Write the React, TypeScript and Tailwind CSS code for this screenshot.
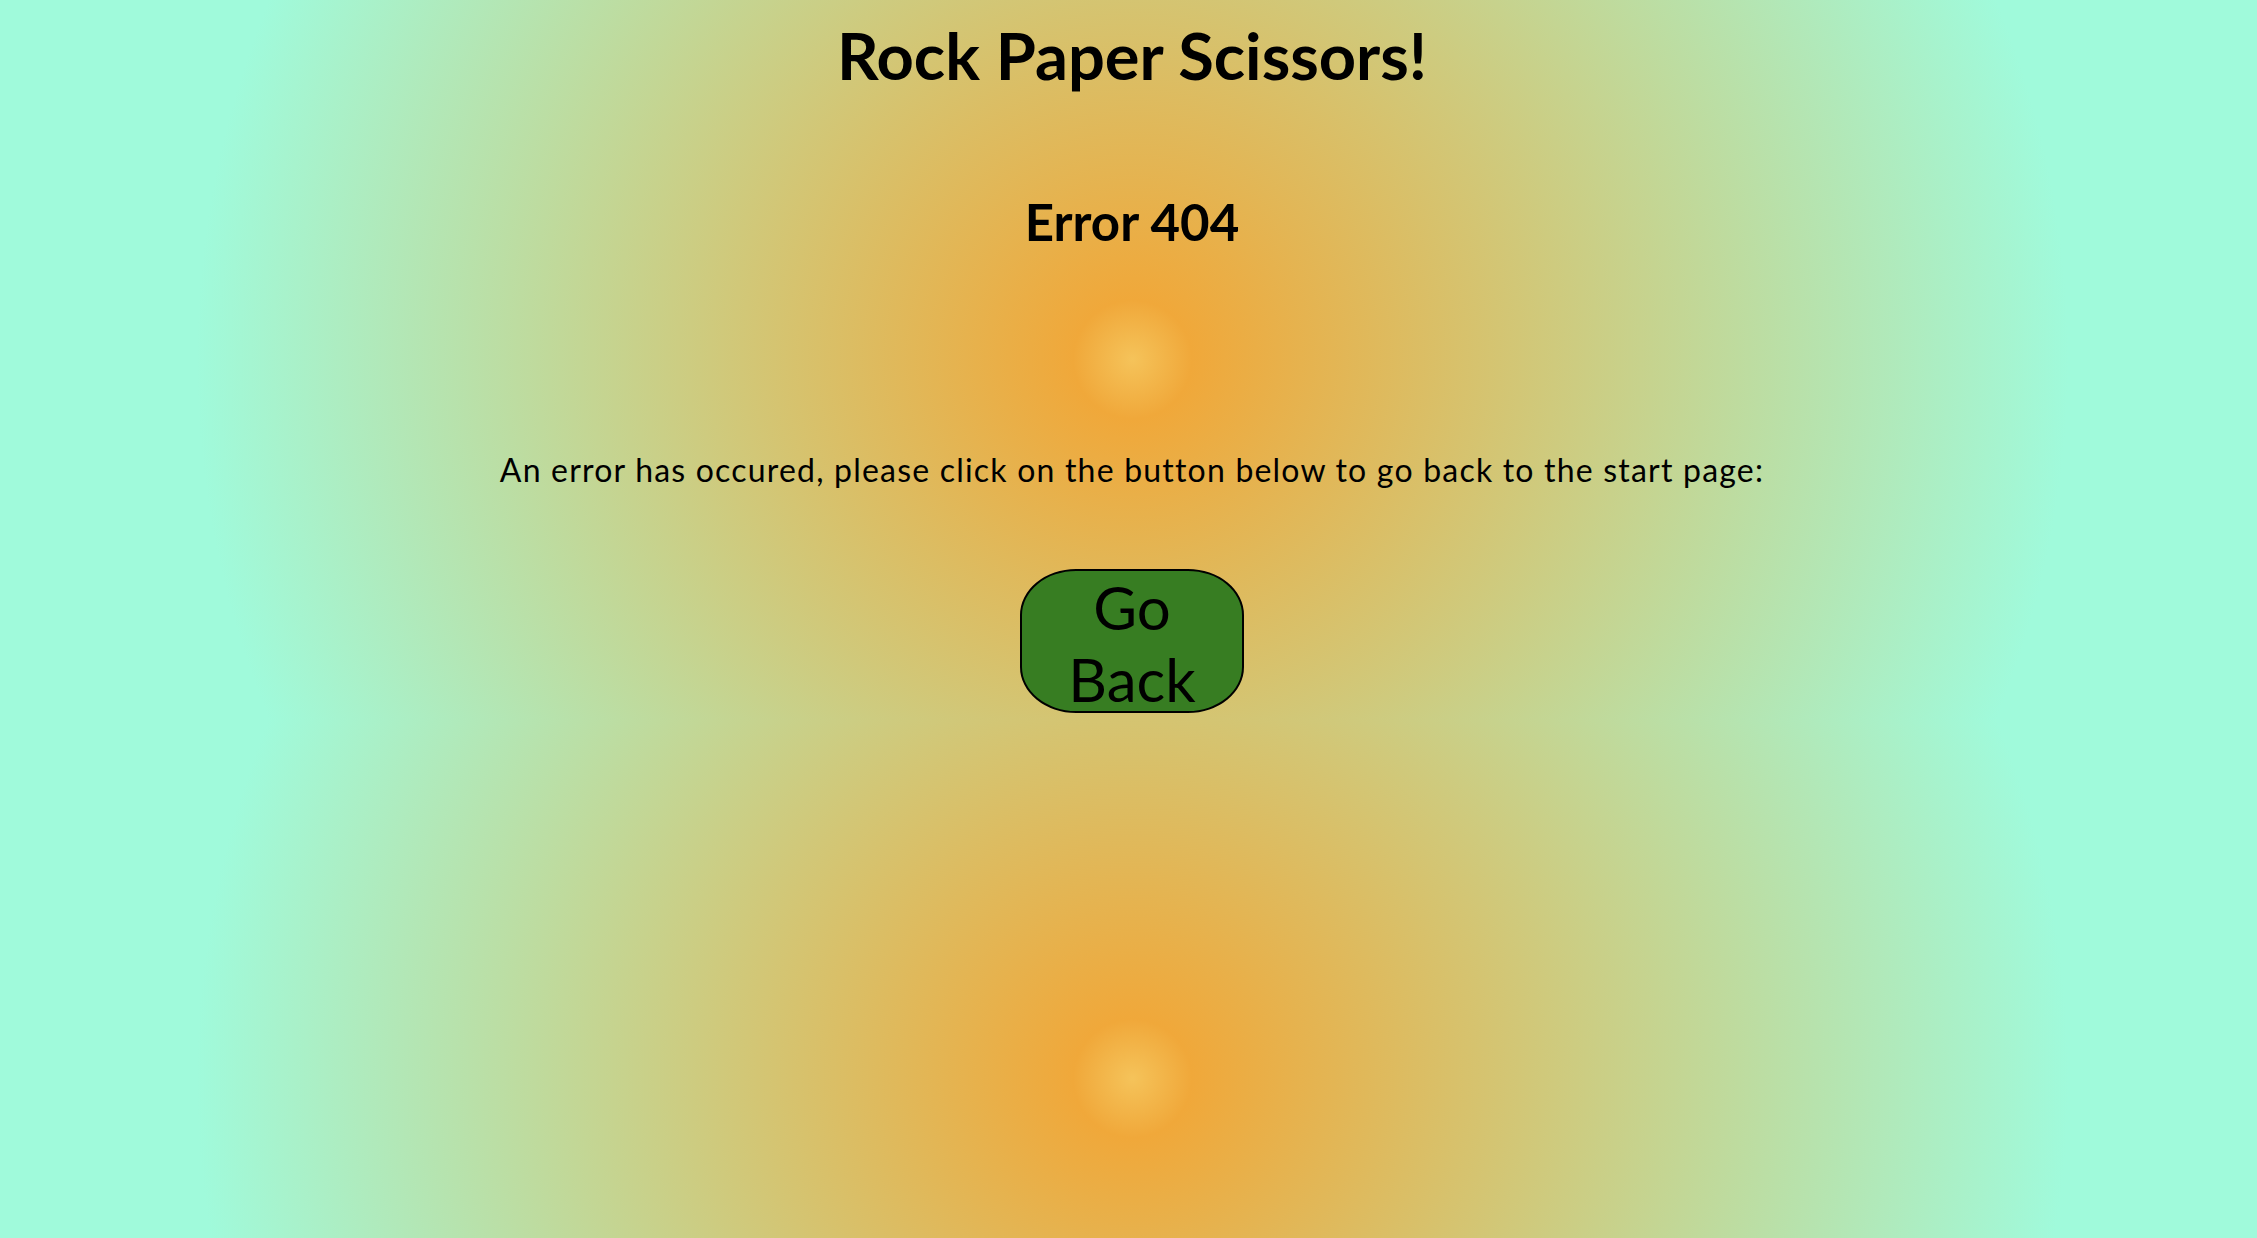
import React from "react";

export default function App() {
  return (
    <div className="min-h-screen w-full flex flex-col items-center pl-[7px] text-black font-['Lato',sans-serif] bg-[radial-gradient(circle,#f5c35a_0%,#f0a83a_5%,#a0fadb_79%)] bg-[length:100%_719px] bg-[position:4px_0] bg-repeat">
      <h1 className="mt-[15px] text-[65px] leading-[80px] font-bold">Rock Paper Scissors!</h1>
      <h2 className="mt-[96px] text-[51px] leading-[62px] font-bold">Error 404</h2>
      <p className="mt-[197px] text-[32px] leading-[40px] tracking-[1.2px]">
        An error has occured, please click on the button below to go back to the start page:
      </p>
      <button className="mt-[79px] w-[224px] h-[144px] rounded-[56px/46px] border-2 border-black bg-[#377d22] text-[60px] leading-[72px] text-black">
        Go Back
      </button>
    </div>
  );
}
